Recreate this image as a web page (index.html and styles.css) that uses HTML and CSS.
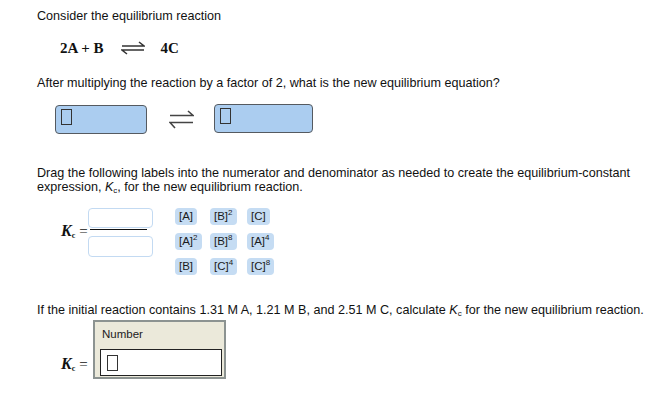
FILE: index.html
```html
<!DOCTYPE html>
<html>
<head>
<meta charset="utf-8">
<link rel="stylesheet" href="styles.css">
</head>
<body>
<div class="page">
  <p class="txt q1">Consider the equilibrium reaction</p>
  <div class="eq">
    <span class="eq-side">2A + B</span>
    <svg class="eq-arrow" width="24" height="14" viewBox="0 0 24 14">
      <path d="M1 5 H23 L18 1" fill="none" stroke="#333" stroke-width="1.5"/>
      <path d="M23 9 H1 L6 13" fill="none" stroke="#333" stroke-width="1.5"/>
    </svg>
    <span class="eq-side">4C</span>
  </div>
  <p class="txt q2">After multiplying the reaction by a factor of 2, what is the new equilibrium equation?</p>
  <div class="slots">
    <div class="slot slot-l"><span class="caret"></span></div>
    <svg class="slot-arrow" width="25" height="19" viewBox="0 0 25 19">
      <path d="M1 5.5 H24 L19 1" fill="none" stroke="#444" stroke-width="1.6"/>
      <path d="M24 12.5 H1 L6 18" fill="none" stroke="#444" stroke-width="1.6"/>
    </svg>
    <div class="slot slot-r"><span class="caret"></span></div>
  </div>
  <p class="txt q3">Drag the following labels into the numerator and denominator as needed to create the equilibrium-constant expression, <i>K</i><span class="sub">c</span>, for the new equilibrium reaction.</p>
  <div class="kexpr">
    <div class="klabel"><span class="kk">K</span><span class="kc">c</span><span class="keq">=</span></div>
    <div class="frac">
      <div class="drop drop-top"></div>
      <div class="bar"></div>
      <div class="drop drop-bot"></div>
    </div>
    <div class="chips">
      <span class="chip">[A]</span>
      <span class="chip">[B]<sup>2</sup></span>
      <span class="chip">[C]</span>
      <span class="chip">[A]<sup>2</sup></span>
      <span class="chip">[B]<sup>8</sup></span>
      <span class="chip">[A]<sup>4</sup></span>
      <span class="chip">[B]</span>
      <span class="chip">[C]<sup>4</sup></span>
      <span class="chip">[C]<sup>8</sup></span>
    </div>
  </div>
  <p class="txt q4">If the initial reaction contains 1.31 M A, 1.21 M B, and 2.51 M C, calculate <i>K</i><span class="sub">c</span> for the new equilibrium reaction.</p>
  <div class="answer">
    <div class="klabel klabel-ans"><span class="kk">K</span><span class="kc">c</span><span class="keq">=</span></div>
    <div class="numbox">
      <div class="numlabel">Number</div>
      <div class="numinput"><span class="caret caret-w"></span></div>
    </div>
  </div>
</div>
</body>
</html>
```

FILE: styles.css
```css
html, body {
  margin: 0;
  padding: 0;
  background: #fff;
}
body {
  font-family: "Liberation Sans", Arial, sans-serif;
  font-size: 12.6px;
  color: #111;
}
.page {
  padding: 9px 0 0 37px;
}
.txt {
  margin: 0;
  line-height: 14px;
}
.sub {
  font-size: 8px;
  position: relative;
  top: 2px;
}
.eq {
  display: flex;
  align-items: center;
  height: 18px;
  margin: 16px 0 0 23px;
  font-family: "Liberation Serif", "Times New Roman", serif;
  font-weight: bold;
  font-size: 15px;
  color: #111;
}
.eq-arrow {
  margin: 0 16px 0 17px;
}
.q2 {
  margin-top: 19px;
}
.slots {
  display: flex;
  align-items: center;
  margin: 14px 0 0 18px;
  height: 30px;
}
.slot {
  box-sizing: border-box;
  height: 29px;
  background: #abcdf0;
  border: 1px solid #555a60;
  border-radius: 4px;
  padding: 3px 0 0 5px;
}
.slot-l {
  width: 92px;
  margin-top: 1px;
}
.slot-r {
  width: 99px;
  margin-top: -1px;
}
.slot-arrow {
  margin: 0 20px 0 22px;
}
.caret {
  display: block;
  box-sizing: border-box;
  width: 11px;
  height: 16px;
  border: 1px solid #333;
}
.q3 {
  margin-top: 32px;
}
.kexpr {
  display: flex;
  align-items: flex-start;
  margin-top: 12px;
}
.klabel {
  display: flex;
  align-items: baseline;
  font-family: "Liberation Serif", "Times New Roman", serif;
  margin: 14px 0 0 24px;
  width: 27px;
}
.kk {
  font-weight: bold;
  font-style: italic;
  font-size: 16px;
}
.kc {
  font-weight: bold;
  font-size: 8px;
  position: relative;
  top: 2px;
}
.keq {
  font-size: 15px;
  margin-left: 4px;
}
.frac {
  display: flex;
  flex-direction: column;
  align-items: flex-start;
  width: 65px;
}
.drop {
  box-sizing: border-box;
  width: 65px;
  border: 1px solid #c3daf2;
  border-radius: 4px;
  background: #fff;
}
.drop-top {
  height: 20px;
}
.drop-bot {
  height: 21px;
}
.bar {
  width: 57px;
  height: 1px;
  background: #111;
  margin: 1px 0 6px 2px;
}
.chips {
  display: grid;
  grid-template-columns: 35px 37px auto;
  grid-auto-rows: 17px;
  row-gap: 8px;
  justify-items: start;
  margin-left: 22px;
  font-size: 11.5px;
}
.chip {
  box-sizing: border-box;
  height: 17px;
  line-height: 17px;
  padding: 0 4px;
  min-width: 22px;
  background: #c5dcf3;
  border-radius: 4px;
  color: #1a1a1a;
  text-align: center;
}
.chip sup {
  font-size: 8px;
  line-height: 0;
  vertical-align: 5px;
}
.q4 {
  margin-top: 28px;
}
.answer {
  display: flex;
  align-items: flex-start;
  margin-top: 1px;
}
.klabel-ans {
  margin: 35px 0 0 24px;
  width: 32px;
}
.numbox {
  box-sizing: border-box;
  width: 133px;
  height: 59px;
  background: #ebe9da;
  border: 2px solid #8c9391;
  padding: 5px 2px 0 5px;
}
.numlabel {
  font-size: 11.5px;
  line-height: 14px;
  color: #222;
  margin-left: 2px;
}
.numinput {
  box-sizing: border-box;
  height: 27px;
  margin-top: 8px;
  background: #fff;
  border: 1px solid #222;
  padding: 5px 0 0 6px;
}
.caret-w {
  width: 11px;
  height: 16px;
}
```
